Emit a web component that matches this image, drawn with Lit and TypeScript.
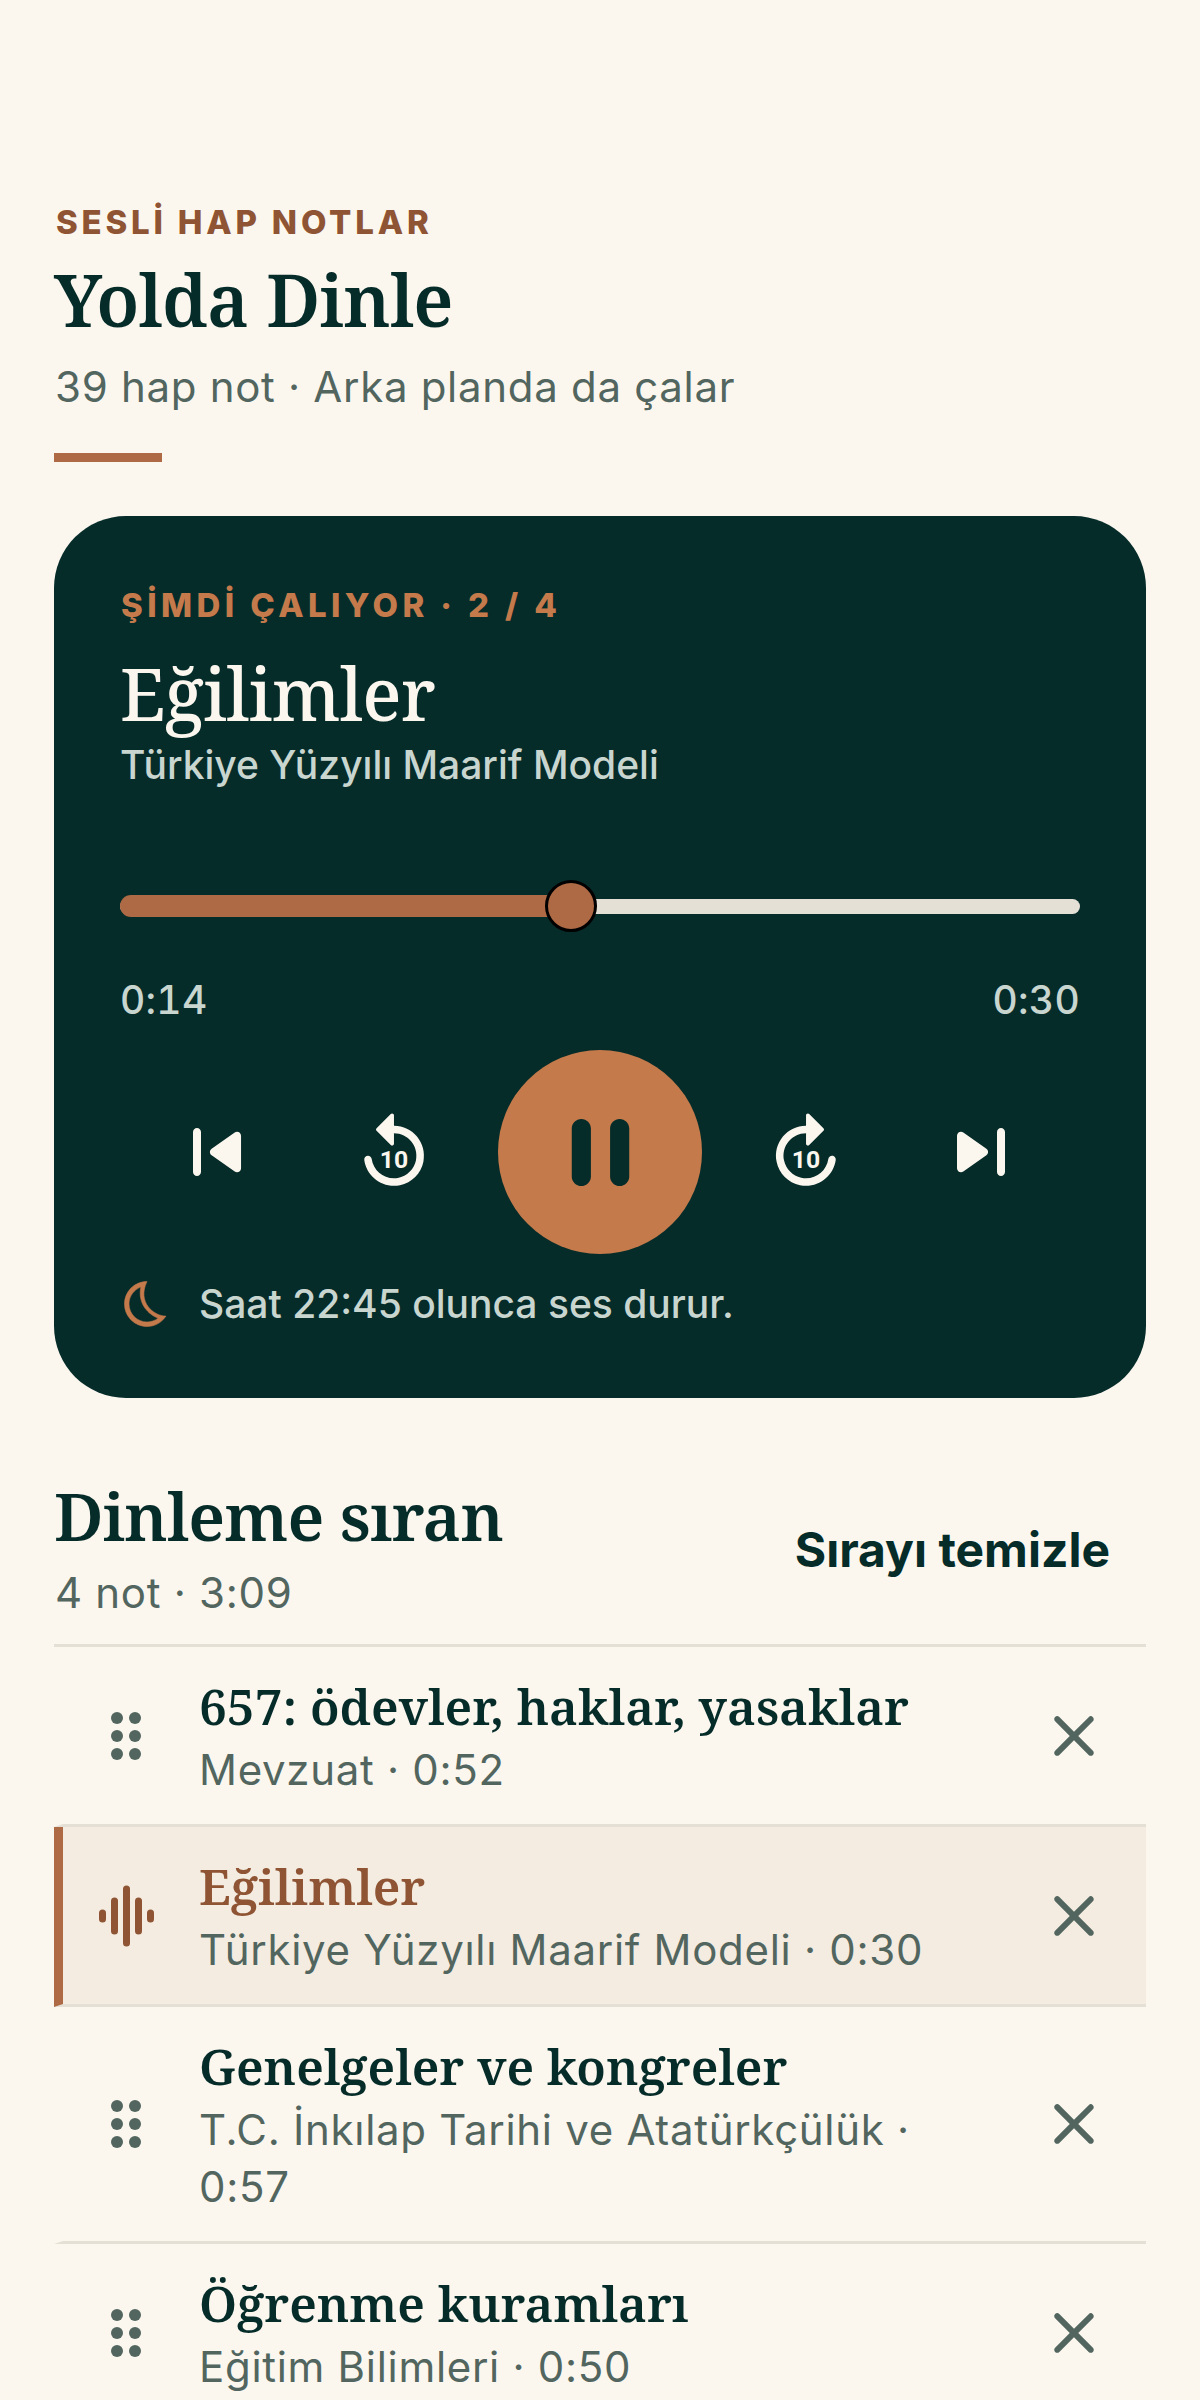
import { LitElement, html, css, svg } from 'lit';
import { customElement } from 'lit/decorators.js';

const queue = [
  { title: '657: ödevler, haklar, yasaklar', meta: 'Mevzuat · 0:52', active: false },
  { title: 'Eğilimler', meta: 'Türkiye Yüzyılı Maarif Modeli · 0:30', active: true },
  { title: 'Genelgeler ve kongreler', meta: 'T.C. İnkılap Tarihi ve Atatürkçülük · 0:57', active: false },
  { title: 'Öğrenme kuramları', meta: 'Eğitim Bilimleri · 0:50', active: false },
];

const replayPath =
  'M11.99 5V2.21c0-.45-.54-.67-.85-.35L7.35 5.65c-.2.2-.2.51 0 .71l3.79 3.79c.31.31.85.09.85-.35V7c3.73 0 6.68 3.42 5.86 7.29-.47 2.27-2.31 4.1-4.57 4.57-3.57.75-6.75-1.7-7.23-5.01-.07-.48-.49-.85-.98-.85-.6 0-1.08.53-1 1.13.62 4.39 4.8 7.64 9.53 6.72 3.12-.61 5.63-3.12 6.24-6.24C20.84 9.48 16.94 5 11.99 5z';

@customElement('app-root')
export class AppRoot extends LitElement {
  static styles = css`
    :host {
      display: block;
      background: #fbf7ef;
      color: #062c2a;
      font-family: Inter, 'Liberation Sans', sans-serif;
      height: 2400px;
      overflow: hidden;
    }
    .page {
      padding: 199px 54px 0;
      display: flex;
      flex-direction: column;
    }
    .eyebrow {
      font-size: 33px;
      line-height: 46px;
      font-weight: 800;
      letter-spacing: 3.8px;
      color: #8f5433;
      padding-left: 2px;
    }
    h1 {
      margin: 9px 0 0;
      font-family: 'Noto Serif', 'DejaVu Serif', serif;
      font-size: 72px;
      line-height: 90px;
      font-weight: 600;
      letter-spacing: -0.8px;
    }
    .sub {
      margin-top: 14px;
      font-size: 42px;
      line-height: 58px;
      letter-spacing: 0.7px;
      color: #52665f;
      padding-left: 1px;
    }
    .rule {
      width: 108px;
      height: 9px;
      margin-top: 37px;
      background: #ae6a45;
    }
    .card {
      margin-top: 54px;
      height: 882px;
      box-sizing: border-box;
      padding: 66px 66px 0;
      border-radius: 72px;
      background: #062c2a;
      color: #fbf7ef;
    }
    .card .eyebrow {
      color: #c47a4b;
      letter-spacing: 4.4px;
      padding-left: 1px;
    }
    h2 {
      margin: 20px 0 0;
      font-family: 'Noto Serif', 'DejaVu Serif', serif;
      font-size: 72px;
      line-height: 90px;
      font-weight: 500;
      letter-spacing: -0.7px;
    }
    .course {
      font-size: 39px;
      line-height: 54px;
      font-weight: 500;
      color: #c9d6d0;
    }
    .slider {
      position: relative;
      margin-top: 88px;
      height: 52px;
      display: flex;
      align-items: center;
    }
    .track {
      width: 100%;
      height: 15px;
      border-radius: 8px;
      background: #e5e0d5;
    }
    .fill {
      position: absolute;
      left: 0;
      top: 15px;
      height: 22px;
      border-radius: 11px;
      background: #ae6a45;
    }
    .thumb {
      position: absolute;
      top: 0;
      width: 52px;
      height: 52px;
      box-sizing: border-box;
      margin-left: -26px;
      border-radius: 50%;
      border: 3px solid #000;
      background: #ae6a45;
    }
    .times {
      display: flex;
      justify-content: space-between;
      margin-top: 41px;
      font-size: 39px;
      line-height: 54px;
      font-weight: 500;
      font-variant-numeric: tabular-nums;
      letter-spacing: 0.3px;
      color: #c9d6d0;
    }
    .controls {
      display: flex;
      justify-content: center;
      align-items: center;
      gap: 35px;
      margin-top: 23px;
    }
    .ctl {
      width: 138px;
      height: 138px;
      display: flex;
      align-items: center;
      justify-content: center;
      color: #fbf7ef;
    }
    .ctl.next {
      box-sizing: border-box;
      padding-left: 4px;
    }
    .play {
      width: 204px;
      height: 204px;
      border-radius: 50%;
      background: #c47a4b;
      color: #062c2a;
      display: flex;
      align-items: center;
      justify-content: center;
    }
    svg {
      display: block;
      fill: currentColor;
    }
    .sleep {
      display: flex;
      align-items: center;
      gap: 25px;
      margin-top: 23px;
      font-size: 39px;
      line-height: 54px;
      font-weight: 500;
      color: #c9d6d0;
    }
    .sleep svg {
      color: #c47a4b;
      stroke: currentColor;
      stroke-width: 0.25;
    }
    .head {
      display: flex;
      justify-content: space-between;
      align-items: center;
      margin-top: 76px;
      padding-bottom: 23px;
      border-bottom: 3px solid #e5e0d5;
    }
    .head h3 {
      margin: 0;
      font-family: 'Noto Serif', 'DejaVu Serif', serif;
      font-size: 66px;
      line-height: 82px;
      font-weight: 600;
      letter-spacing: -0.85px;
    }
    .count {
      margin-top: 9px;
      font-size: 42px;
      line-height: 56px;
      letter-spacing: 0.7px;
      color: #52665f;
      padding-left: 1px;
    }
    .clear {
      margin: 5px 36px 0 0;
      font-size: 48px;
      line-height: 60px;
      font-weight: 700;
    }
    .row {
      display: flex;
      align-items: center;
      box-sizing: border-box;
      padding: 23.5px 36px 23.5px 0;
      border-left: 9px solid transparent;
      border-bottom: 3px solid #e5e0d5;
    }
    .row.active {
      background: #f4ece1;
      border-left-color: #ae6a45;
    }
    .row.active .name {
      color: #8f5433;
    }
    .handle {
      flex: none;
      width: 126px;
      display: flex;
      justify-content: center;
      color: #52665f;
    }
    .active .handle {
      color: #8f5433;
    }
    .text {
      flex: 1;
      min-width: 0;
      margin-left: 10px;
      padding: 0 40px 3px 0;
    }
    .name {
      font-family: 'Noto Serif', 'DejaVu Serif', serif;
      font-size: 49.5px;
      line-height: 70px;
      font-weight: 600;
      letter-spacing: -0.05px;
    }
    .meta {
      font-size: 42px;
      line-height: 57px;
      letter-spacing: 0.7px;
      color: #52665f;
    }
    .remove {
      flex: none;
      color: #52665f;
    }
  `;

  private replay(flip: boolean) {
    return html`<svg width="90" height="90" viewBox="0 0 24 24">
      <path d=${replayPath} transform=${flip ? 'matrix(-1 0 0 1 24 0)' : ''}></path>
      <text
        x="12"
        y="16.3"
        text-anchor="middle"
        font-family="Roboto, sans-serif"
        font-weight="700"
        font-size="6.6"
      >10</text>
    </svg>`;
  }

  private grip() {
    const dots = [6, 12, 18].flatMap((y) => [
      svg`<circle cx="9" cy=${y} r="2"></circle>`,
      svg`<circle cx="15" cy=${y} r="2"></circle>`,
    ]);
    return html`<svg width="72" height="72" viewBox="0 0 24 24">${dots}</svg>`;
  }

  private wave() {
    const bars = [
      [0, 13],
      [12, 37],
      [24, 61],
      [36, 37],
      [48, 13],
    ];
    return html`<svg width="55" height="62" viewBox="0 0 55 62">
      ${bars.map(
        ([x, h]) => svg`<rect x=${x} y=${31 - h / 2} width="7" height=${h} rx="3.5"></rect>`
      )}
    </svg>`;
  }

  render() {
    const progress = 47;
    return html`
      <div class="page">
        <div class="eyebrow">SESLİ HAP NOTLAR</div>
        <h1>Yolda Dinle</h1>
        <div class="sub">39 hap not · Arka planda da çalar</div>
        <div class="rule"></div>

        <section class="card">
          <div class="eyebrow">ŞİMDİ ÇALIYOR · 2 / 4</div>
          <h2>Eğilimler</h2>
          <div class="course">Türkiye Yüzyılı Maarif Modeli</div>
          <div class="slider">
            <div class="track"></div>
            <div class="fill" style="width:${progress}%"></div>
            <div class="thumb" style="left:${progress}%"></div>
          </div>
          <div class="times"><span>0:14</span><span>0:30</span></div>
          <div class="controls">
            <div class="ctl">
              <svg width="96" height="96" viewBox="0 0 24 24">
                <path
                  d="M6 6c.55 0 1 .45 1 1v10c0 .55-.45 1-1 1s-1-.45-1-1V7c0-.55.45-1 1-1zm3.66 6.82 5.77 4.07c.66.47 1.58-.01 1.58-.82V7.93c0-.81-.91-1.28-1.58-.82l-5.77 4.07c-.57.4-.57 1.24 0 1.64z"
                ></path>
              </svg>
            </div>
            <div class="ctl">${this.replay(false)}</div>
            <div class="play">
              <svg width="115" height="115" viewBox="0 0 24 24">
                <path
                  d="M8 19c1.1 0 2-.9 2-2V7c0-1.1-.9-2-2-2s-2 .9-2 2v10c0 1.1.9 2 2 2zm6-12v10c0 1.1.9 2 2 2s2-.9 2-2V7c0-1.1-.9-2-2-2s-2 .9-2 2z"
                ></path>
              </svg>
            </div>
            <div class="ctl">${this.replay(true)}</div>
            <div class="ctl next">
              <svg width="96" height="96" viewBox="0 0 24 24">
                <path
                  d="M7.58 16.89l5.77-4.07c.56-.4.56-1.24 0-1.63L7.58 7.11C6.91 6.65 6 7.12 6 7.93v8.14c0 .81.91 1.28 1.58.82zM16 7v10c0 .55.45 1 1 1s1-.45 1-1V7c0-.55-.45-1-1-1s-1 .45-1 1z"
                ></path>
              </svg>
            </div>
          </div>
          <div class="sleep">
            <svg width="54" height="54" viewBox="0 0 24 24">
              <path
                d="M9.27 4.49c-1.63 7.54 3.75 12.41 7.66 13.8C15.54 19.38 13.81 20 12 20c-4.41 0-8-3.59-8-8 0-3.45 2.2-6.4 5.27-7.51m2.72-2.48C6.4 2 2 6.51 2 12c0 5.52 4.48 10 10 10 3.55 0 6.65-1.85 8.42-4.63-5.43-.02-12.9-6.11-8.43-15.36z"
              ></path>
            </svg>
            <span>Saat 22:45 olunca ses durur.</span>
          </div>
        </section>

        <div class="head">
          <div>
            <h3>Dinleme sıran</h3>
            <div class="count">4 not · 3:09</div>
          </div>
          <div class="clear">Sırayı temizle</div>
        </div>

        ${queue.map(
          (item) => html`
            <div class="row ${item.active ? 'active' : ''}">
              <div class="handle">${item.active ? this.wave() : this.grip()}</div>
              <div class="text">
                <div class="name">${item.title}</div>
                <div class="meta">${item.meta}</div>
              </div>
              <svg class="remove" width="72" height="72" viewBox="0 0 24 24">
                <path
                  d="M18.3 5.71a.9959.9959 0 0 0-1.41 0L12 10.59 7.11 5.7a.9959.9959 0 0 0-1.41 0c-.39.39-.39 1.02 0 1.41L10.59 12 5.7 16.89c-.39.39-.39 1.02 0 1.41.39.39 1.02.39 1.41 0L12 13.41l4.89 4.89c.39.39 1.02.39 1.41 0 .39-.39.39-1.02 0-1.41L13.41 12l4.89-4.89c.38-.38.38-1.02 0-1.4z"
                ></path>
              </svg>
            </div>
          `
        )}
      </div>
    `;
  }
}
